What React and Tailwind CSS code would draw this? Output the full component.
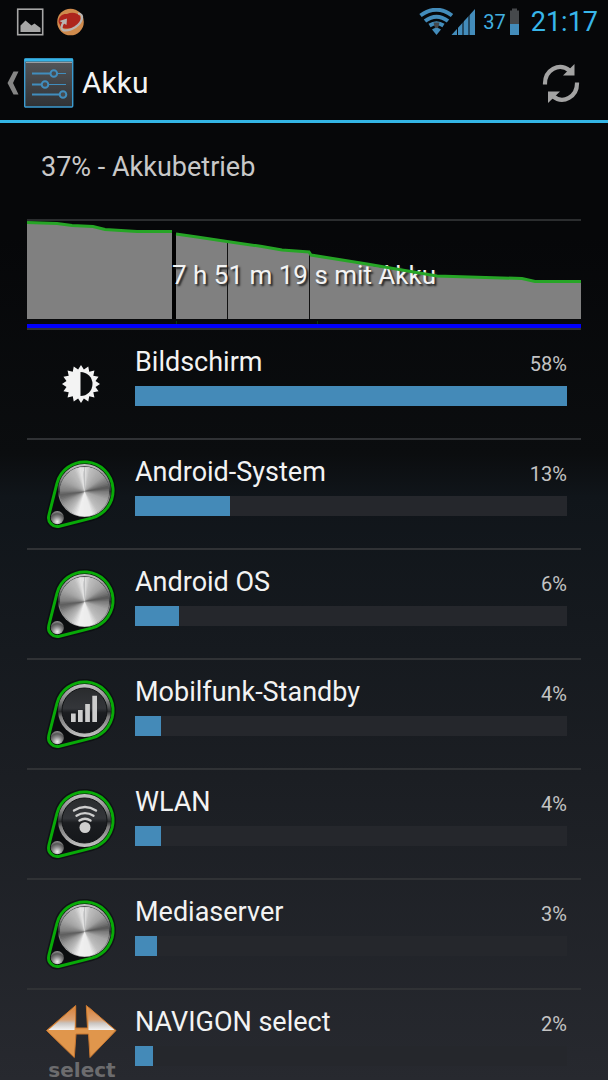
import { useId } from "react";

const USAGE = [
  { name: "Bildschirm", percent: 58, width: "100%", icon: "brightness" },
  { name: "Android-System", percent: 13, width: "22%", icon: "metal" },
  { name: "Android OS", percent: 6, width: "10.2%", icon: "metal" },
  { name: "Mobilfunk-Standby", percent: 4, width: "6%", icon: "signal" },
  { name: "WLAN", percent: 4, width: "6%", icon: "wifi" },
  { name: "Mediaserver", percent: 3, width: "5%", icon: "metal" },
  { name: "NAVIGON select", percent: 2, width: "4.2%", icon: "navigon" },
];

// brushed metal: brightness by angle, 0 = top, clockwise
const METAL_STOPS = [
  [0, 228], [14, 190], [50, 160], [72, 110], [80, 84], [90, 120], [110, 165], [145, 190],
  [162, 235], [195, 240], [215, 190], [240, 150], [252, 115], [261, 92], [272, 125], [300, 165], [335, 190], [350, 228], [361, 228],
];

function metalAt(angle) {
  const i = METAL_STOPS.findIndex(([a]) => a > angle);
  const [a0, v0] = METAL_STOPS[i - 1];
  const [a1, v1] = METAL_STOPS[i];
  return Math.round(v0 + ((v1 - v0) * (angle - a0)) / (a1 - a0));
}

function point(cx, cy, r, deg) {
  const rad = (deg * Math.PI) / 180;
  return `${(cx + r * Math.sin(rad)).toFixed(2)},${(cy - r * Math.cos(rad)).toFixed(2)}`;
}

// each wedge runs on under the next one so that no seams show
const WEDGES = Array.from({ length: 90 }, (_, i) => {
  const v = metalAt(i * 4 + 2);
  return {
    points: `38.5,32.5 ${point(38.5, 32.5, 25, i * 4)} ${point(38.5, 32.5, 25, i * 4 + 5)} ${point(38.5, 32.5, 25, i * 4 + (i < 87 ? 12 : 4))}`,
    fill: `rgb(${v},${v},${v})`,
  };
});

const SUN = Array.from({ length: 32 }, (_, i) => point(35, 35, i % 2 ? 14.8 : 19, i * 11.25)).join(" ");

const KNOB_OUTLINE = "M10.9 24.5A28.5 28.5 0 1 1 45.5 59.1L13.5 67.2A8.8 8.8 0 0 1 2.8 56.5Z";

function BrightnessIcon() {
  return (
    <svg className="size-[70px]" viewBox="0 0 70 70" aria-hidden="true">
      <polygon points={SUN} fill="#f3f3f3" />
      <path d="M34.5 23a12 12 0 0 1 0 24z" fill="#0a0c0e" />
    </svg>
  );
}

function KnobIcon({ kind }) {
  const id = useId();
  return (
    <svg className="size-[70px] overflow-visible" viewBox="0 0 70 70" aria-hidden="true">
      <defs>
        <linearGradient id={`${id}rim`} x1="0" y1="0" x2="0" y2="1">
          <stop offset="0" stopColor="#c4c4c4" />
          <stop offset="0.3" stopColor="#858585" />
          <stop offset="0.45" stopColor="#4a4c4e" />
          <stop offset="0.52" stopColor="#2a2c2e" />
          <stop offset="0.62" stopColor="#7c7c7c" />
          <stop offset="1" stopColor="#c4c4c4" />
        </linearGradient>
        <linearGradient id={`${id}face`} x1="0" y1="0" x2="0" y2="1">
          <stop offset="0" stopColor="#292b2d" />
          <stop offset="0.45" stopColor="#34363a" />
          <stop offset="0.55" stopColor="#1b1d20" />
          <stop offset="1" stopColor="#15171b" />
        </linearGradient>
        <radialGradient id={`${id}ball`} cx="0.5" cy="0.8" r="0.8">
          <stop offset="0" stopColor="#f0f0f0" />
          <stop offset="0.45" stopColor="#8a8a8a" />
          <stop offset="0.75" stopColor="#555" />
          <stop offset="1" stopColor="#999" />
        </radialGradient>
        <clipPath id={`${id}disc`}>
          <circle cx="38.5" cy="32.5" r="24.5" />
        </clipPath>
      </defs>
      <path d={KNOB_OUTLINE} fill="none" stroke="#06080a" strokeOpacity="0.55" strokeWidth="6" />
      <path d={KNOB_OUTLINE} fill="#0b0d0f" stroke="#08aa08" strokeWidth="3" />
      <circle cx="38.5" cy="31.5" r="26.5" fill={`url(#${id}rim)`} />
      {kind === "metal" ? (
        <g>
          <circle cx="38.5" cy="32" r="25" fill="#55575a" />
          <g clipPath={`url(#${id}disc)`}>
            {WEDGES.map((w) => (
              <polygon key={w.points} points={w.points} fill={w.fill} />
            ))}
          </g>
        </g>
      ) : (
        <circle cx="38.5" cy="31.5" r="22.5" fill={`url(#${id}face)`} stroke="#111315" strokeWidth="1" />
      )}
      {kind === "signal" && (
        <path d="M25 34.5h4.7V43H25zM32 31h4.7v12H32zM39.2 25h4.7v18h-4.7zM46.3 16.7H51V43h-4.7z" fill="#cdcdcd" />
      )}
      {kind === "wifi" && (
        <g fill="none" stroke="#cfcfcf" strokeWidth="2.4" strokeLinecap="round">
          <path d="M28 21.5Q39 14.5 50 21.5" />
          <path d="M30.5 26.7Q39 21.5 47.5 26.7" />
          <path d="M33.5 31.5Q39 28 44.5 31.5" />
          <circle cx="39" cy="38.500" r="5.500" fill="#cfcfcf" stroke="none" />
        </g>
      )}
      <circle cx="11.3" cy="58.7" r="6.600" fill={`url(#${id}ball)`} />
    </svg>
  );
}

function NavigonIcon() {
  return (
    <svg className="size-[78px]" viewBox="0 0 78 78" aria-hidden="true">
      <defs>
        <linearGradient id="navigonTop" x1="0" y1="0" x2="0" y2="1">
          <stop offset="0" stopColor="#d9813a" />
          <stop offset="0.55" stopColor="#dda272" />
          <stop offset="0.7" stopColor="#c9c4c0" />
          <stop offset="1" stopColor="#f4f4f4" />
        </linearGradient>
      </defs>
      <path d="M4.500 25.500L33.700 0.500V23H45.500L44.300 0.500L74 25.500L48 52.500L46.500 29H34L32.300 52.500Z" fill="#e0964c" />
      <path d="M6.500 25L33.500 2L32.500 25ZM46.500 2L72.500 25H46.500Z" fill="url(#navigonTop)" />
      <path d="M4.500 25.500L33.700 0.500V23H45.500L44.300 0.500L74 25.500L48 52.500L46.500 29H34L32.300 52.500Z" fill="none" stroke="#c9772f" strokeWidth="1" />
      <text x="40" y="72" textAnchor="middle" fontSize="20" fontWeight="700" fill="#6c6c6e" fontFamily="'DejaVu Sans', sans-serif">
        select
      </text>
    </svg>
  );
}

function RowIcon({ icon }) {
  if (icon === "brightness") return <BrightnessIcon />;
  if (icon === "navigon") return <NavigonIcon />;
  return <KnobIcon kind={icon} />;
}

function StatusBar() {
  return (
    <div className="flex h-[43px] items-center justify-between pr-[10px] pl-4">
      <div className="flex items-center gap-3">
        <svg className="size-7" viewBox="0 0 28 28" aria-hidden="true">
          <rect x="1.700" y="1.200" width="25" height="25.500" fill="none" stroke="#a6a6a6" strokeWidth="1.600" />
          <path d="M4.500 24V17.500L9.500 12.500L15.500 17.500L18.500 15.500L24.500 20V24Z" fill="#a6a6a6" />
        </svg>
        <svg className="size-7" viewBox="0 0 28 28" aria-hidden="true">
          <circle cx="14.500" cy="14" r="13.300" fill="#cf8a4c" />
          <path d="M2.500 14C2.500 8 7 5.500 11 6C16 3.500 22 5 24 8C26 14 23 18 19 19C14 21 8 21 5 19Z" fill="#ae251d" />
          <path d="M22 5.500C28.500 5.500 27 14 19.500 19C12 23.500 5.500 23.500 5.500 19.500C5.500 17.500 6.500 15.500 8.500 13" fill="none" stroke="#b9b4b2" strokeWidth="2.200" />
          <path d="M3.500 13L11 10.500L10.500 17Z" fill="#b9b4b2" />
        </svg>
      </div>
      <div className="flex items-center gap-2">
        <svg className="h-7 w-14" viewBox="0 0 56 28" aria-hidden="true">
          <g fill="none" stroke="#438cbb" strokeWidth="4">
            <path d="M1.500 7.500Q17.500 -4 33 7.500" />
            <path d="M6 13Q17.500 4.500 29 13" />
            <path d="M10.500 17.500Q17.500 13 24.500 17.500" />
          </g>
          <path d="M13 21.500Q17.500 18 22 21.500L17.500 27Z" fill="#438cbb" />
          <path d="M14.500 14.500h6l-1.500 5.500h-3z" fill="#44484c" />
          <path d="M32.500 27L56 1V27Z" fill="#438cbb" />
          <path d="M38.500 18V28M44 12V28M50 6V28" stroke="#060709" strokeWidth="1" />
        </svg>
        <span className="text-[20px] leading-6 text-[#41afe0]">37</span>
        <svg className="-ml-1 h-7 w-[9px]" viewBox="0 0 9 28" aria-hidden="true">
          <path d="M2 0.500h5v2h2V27H0V2.500h2z" fill="#46494c" />
          <path d="M0 16h9v11H0z" fill="#438cbb" />
        </svg>
        <time className="ml-1 text-[27px] leading-8 text-[#38b6ea]">21:17</time>
      </div>
    </div>
  );
}

function ActionBar() {
  return (
    <header className="flex h-20 items-center justify-between border-b-[3px] border-[#33b5e5] pt-[2px] pr-7 pl-[7px]">
      <button type="button" aria-label="Zurück" className="flex items-center gap-[5px]">
        <svg className="h-6 w-3" viewBox="0 0 12 24" aria-hidden="true">
          <path d="M6.500 0.500H11.500L6 12L11.500 23.500H6.500L0.500 12Z" fill="#858585" />
        </svg>
        <svg className="size-[50px]" viewBox="0 0 50 50" aria-hidden="true">
          <defs>
            <linearGradient id="settingsFace" x1="0" y1="0" x2="0" y2="1">
              <stop offset="0" stopColor="#55575a" />
              <stop offset="1" stopColor="#303235" />
            </linearGradient>
          </defs>
          <rect x="0.700" y="1" width="48" height="48" rx="1" fill="url(#settingsFace)" stroke="#3b9bd0" strokeWidth="1.400" />
          <path d="M0.500 2H49" stroke="#35b4e8" strokeWidth="3" />
          <path d="M2 4.500H48" stroke="#9a9ea2" strokeWidth="1" />
          <g fill="none" stroke="#418dbd">
            <path d="M8 15.500H42M8 26.500H42" strokeWidth="1.200" />
            <path d="M8 15.500H27M8 26.500H18M8 36.500H36" strokeWidth="2" />
            <g fill="#484b4e" strokeWidth="2">
              <circle cx="29.800" cy="15.500" r="3.300" />
              <circle cx="21" cy="26.500" r="3.300" />
              <circle cx="39" cy="36.500" r="3.300" />
            </g>
          </g>
        </svg>
        <h1 className="ml-[3px] text-[30px] leading-9 text-[#f3f3f3]">Akku</h1>
      </button>
      <button type="button" aria-label="Aktualisieren">
        <svg className="h-10 w-[38px]" viewBox="0 0 38 40" aria-hidden="true">
          <g fill="none" stroke="#a3a3a3" strokeWidth="4.200">
            <path d="M3 21.500C2.500 7 17 -1 27.500 7.500" />
            <path d="M35 19.500C35.500 34 21 41.500 10.500 33" />
          </g>
          <path d="M32.500 1V12.500H21Z" fill="#a3a3a3" />
          <path d="M6 40V28.500H18Z" fill="#a3a3a3" />
        </svg>
      </button>
    </header>
  );
}

function BatteryChart() {
  return (
    <div className="grid h-[109px] border-t-2 border-[#2b2d2f] [&>*]:[grid-area:1/1]">
      <svg className="h-[107px] w-full" viewBox="0 0 554 107" preserveAspectRatio="none" aria-hidden="true">
        <path d="M0 2L30 3L45 5L66 6L78 9L110 11H145V98H0Z" fill="#808080" />
        <path d="M149 13L200 21L235 26L255 29L282 31L284 34L340 44L375 50L410 55L495 58L508 61H554V98H149Z" fill="#808080" />
        <path d="M145 11h4v87h-4z" fill="#000" />
        <path d="M200.500 21V98M282.500 31V98" stroke="#111" strokeWidth="1" />
        <path d="M149.500 100V103M290.500 100V103" stroke="#073d0c" strokeWidth="1" />
        <path d="M0 103H554V107H0Z" fill="#0000fa" />
      </svg>
      <p className="pt-[38px] text-center text-[26px] leading-8 text-[#f3f3f3] [text-shadow:2px_2px_2px_#222]">
        7 h 51 m 19 s mit Akku
      </p>
      <svg className="h-[107px] w-full" viewBox="0 0 554 107" preserveAspectRatio="none" aria-hidden="true">
        <g fill="none" stroke="#26a526" strokeWidth="3">
          <path d="M0 1.500L30 2.500L45 4.500L66 5.500L78 8.500L110 10.500H145" />
          <path d="M149 13L170 16L200 20.500L235 25.500L255 29L282 31L284 34L340 43L375 49L410 55L495 57.500L508 60.500H554" />
        </g>
      </svg>
    </div>
  );
}

function UsageRow({ name, percent, width, icon }) {
  return (
    <li className="flex h-[110px] items-center border-t-2 border-[#303235]">
      <div className="flex w-[108px] shrink-0 justify-center">
        <RowIcon icon={icon} />
      </div>
      <div className="flex h-full flex-1 flex-col pt-4 pr-[14px]">
        <div className="flex items-center justify-between">
          <span className="text-[27px] leading-8 text-[#f3f3f3]">{name}</span>
          <span className="pt-1 text-[20px] leading-7 text-[#c4c4c4]">{percent}%</span>
        </div>
        <div className="mt-2 h-5 bg-[#25272c]">
          <div className="h-full bg-[#448ab8]" style={{ width }} />
        </div>
      </div>
    </li>
  );
}

export default function App() {
  return (
    <div className="flex h-screen flex-col overflow-hidden bg-[linear-gradient(to_bottom,#060709_22%,#0b0d0f_42%,#10151a_46%,#1b1e23_72%,#27292f)] font-[Roboto,sans-serif]">
      <StatusBar />
      <ActionBar />
      <main className="min-h-0 flex-1 overflow-hidden px-[27px]">
        <h2 className="flex h-24 items-center pb-2 pl-[14px] text-[27px] leading-8 text-[#c8c8c8]">37% - Akkubetrieb</h2>
        <BatteryChart />
        <ul>
          {USAGE.map((item) => (
            <UsageRow key={item.name} {...item} />
          ))}
        </ul>
      </main>
    </div>
  );
}
